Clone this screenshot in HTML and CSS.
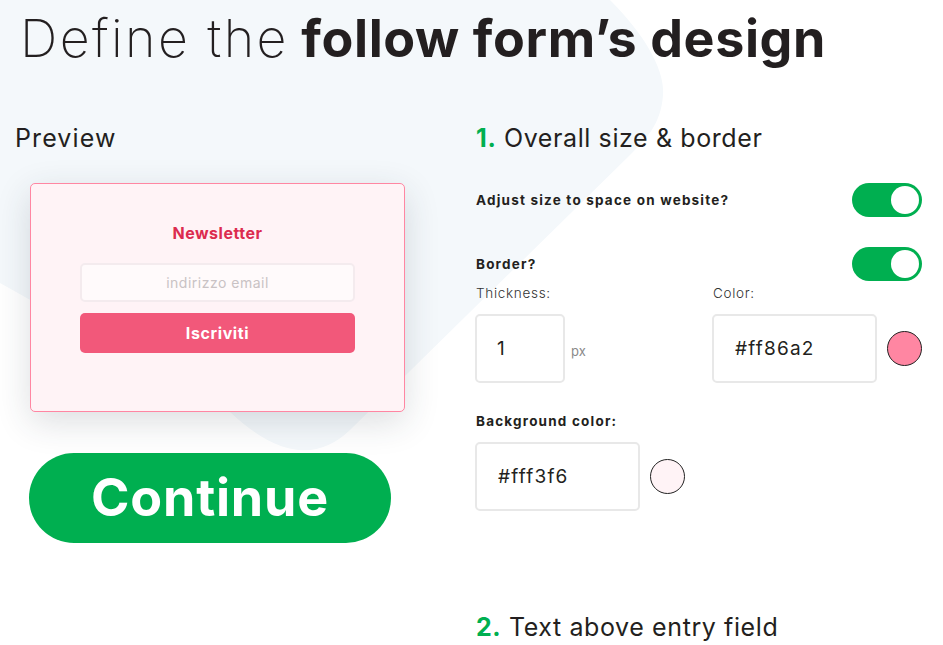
FILE: index.html
```html
<!DOCTYPE html>
<html lang="en">
<head>
<meta charset="utf-8">
<title>Follow form design</title>
<link rel="stylesheet" href="styles.css">
</head>
<body>
<div class="page">
  <svg class="blob" width="700" height="470" viewBox="0 0 700 470" aria-hidden="true">
    <path d="M0,0 L610,0 C645,35 665,70 663,95 C661,125 645,140 630,155 L350,430 Q300,478 230,412 L0,283 Z" fill="#f4f8fb"/>
  </svg>
  <h1 class="title"><span class="thin">Define the</span> <b class="bold">follow form’s design</b></h1>
  <div class="columns">
    <section class="preview-col">
      <h2 class="preview-title">Preview</h2>
      <div class="nl-card">
        <div class="nl-title">Newsletter</div>
        <div class="nl-input">indirizzo email</div>
        <div class="nl-btn">Iscriviti</div>
      </div>
      <button class="continue">Continue</button>
    </section>
    <section class="settings">
      <h2 class="step"><span class="num">1.</span> Overall size &amp; border</h2>
      <div class="toggle-row first">
        <span class="label">Adjust size to space on website?</span>
        <span class="toggle"><span class="knob"></span></span>
      </div>
      <div class="toggle-row second">
        <span class="label">Border?</span>
        <span class="toggle"><span class="knob"></span></span>
      </div>
      <div class="field-grid">
        <div class="field">
          <div class="sub">Thickness:</div>
          <div class="field-line">
            <div class="box thick">1</div>
            <span class="unit">px</span>
          </div>
        </div>
        <div class="field">
          <div class="sub">Color:</div>
          <div class="field-line">
            <div class="box color">#ff86a2</div>
            <span class="swatch pink"></span>
          </div>
        </div>
      </div>
      <div class="label bg-label">Background color:</div>
      <div class="field-line bg-line">
        <div class="box color">#fff3f6</div>
        <span class="swatch light"></span>
      </div>
      <h2 class="step step2"><span class="num">2.</span> Text above entry field</h2>
    </section>
  </div>
</div>
</body>
</html>
```
FILE: styles.css
```css
* { box-sizing: border-box; }
html, body { margin: 0; padding: 0; background: #fff; }
body {
  font-family: Inter, "Noto Sans", "DejaVu Sans", sans-serif;
  color: #231f20;
  width: 943px;
  height: 645px;
  overflow: hidden;
}
.page { position: relative; width: 943px; height: 645px; }
.blob { position: absolute; left: 0; top: 0; z-index: 0; }
.title, .columns { position: relative; z-index: 1; }

.title {
  margin: 0;
  padding: 11px 0 0 20px;
  height: 115px;
  font-size: 52px;
  line-height: 56px;
  font-weight: 700;
  white-space: nowrap;
}
.title .thin { font-weight: 200; letter-spacing: 2.4px; }
.title .bold { font-weight: 700; letter-spacing: 0.6px; }

.columns {
  display: grid;
  grid-template-columns: 475px 447px;
}

.preview-title, .step {
  margin: 0;
  font-size: 25px;
  line-height: 46px;
  font-weight: 400;
  letter-spacing: 0.6px;
}
.preview-title { padding-left: 15px; letter-spacing: 1.1px; }

.nl-card {
  margin: 22px 0 0 30px;
  width: 375px;
  height: 229px;
  background: #fff3f6;
  border: 1px solid #ff86a2;
  border-radius: 5px;
  box-shadow: 0 10px 35px rgba(40, 50, 60, 0.16);
  padding: 39px 49px 0;
  display: flex;
  flex-direction: column;
}
.nl-title {
  text-align: center;
  color: #dc2b4f;
  font-weight: 700;
  font-size: 16px;
  letter-spacing: 0.5px;
  line-height: 20px;
}
.nl-input {
  margin-top: 20px;
  height: 39px;
  background: #fffafb;
  border: 2px solid #f4ebee;
  border-radius: 5px;
  text-align: center;
  color: #c9c2c4;
  font-size: 14px;
  letter-spacing: 0.5px;
  line-height: 35px;
}
.nl-btn {
  margin-top: 11px;
  height: 40px;
  background: #f2587a;
  border-radius: 5px;
  text-align: center;
  color: #fff;
  font-weight: 700;
  font-size: 16px;
  letter-spacing: 0.6px;
  line-height: 40px;
}

.continue {
  display: block;
  margin: 41px 0 0 29px;
  width: 362px;
  height: 90px;
  border: 0;
  border-radius: 45px;
  background: #00af50;
  color: #fff;
  font-family: inherit;
  font-weight: 700;
  font-size: 52px;
  letter-spacing: 0.8px;
  line-height: 90px;
  padding: 0;
}

.step { padding-left: 1px; }
.step .num { color: #00af50; font-weight: 700; }

.toggle-row {
  display: flex;
  align-items: center;
  justify-content: space-between;
  height: 34px;
}
.toggle-row.first { margin-top: 22px; }
.toggle-row.second { margin-top: 30px; }
.label {
  font-size: 13.5px;
  font-weight: 700;
  letter-spacing: 1.2px;
  line-height: 20px;
  padding-left: 1px;
}
.toggle {
  position: relative;
  width: 70px;
  height: 34px;
  border-radius: 17px;
  background: #00af50;
}
.knob {
  position: absolute;
  right: 3px;
  top: 3px;
  width: 28px;
  height: 28px;
  border-radius: 50%;
  background: #fff;
}

.field-grid {
  display: grid;
  grid-template-columns: 237px 1fr;
  margin-top: 2px;
}
.sub {
  font-size: 13.5px;
  font-weight: 300;
  letter-spacing: 0.7px;
  line-height: 20px;
  color: #333;
  padding-left: 1px;
}
.field-line {
  display: flex;
  align-items: center;
  margin-top: 11px;
}
.box {
  height: 69px;
  border: 2px solid #e8e8e8;
  border-radius: 5px;
  background: #fff;
  font-size: 19px;
  letter-spacing: 1.2px;
  line-height: 65px;
  color: #231f20;
}
.box.thick { width: 90px; padding-left: 20px; }
.box.color { width: 165px; padding-left: 21px; }
.unit {
  margin-left: 6px;
  margin-top: 4px;
  font-size: 13px;
  color: #8a8a8a;
}
.swatch {
  margin-left: 10px;
  width: 35px;
  height: 35px;
  border-radius: 50%;
  border: 1px solid #222;
}
.swatch.pink { background: #ff86a2; }
.swatch.light { background: #fff3f6; }

.bg-label { margin-top: 28px; }
.bg-line { margin-top: 11px; }

.step2 { margin-top: 93px; }
```
